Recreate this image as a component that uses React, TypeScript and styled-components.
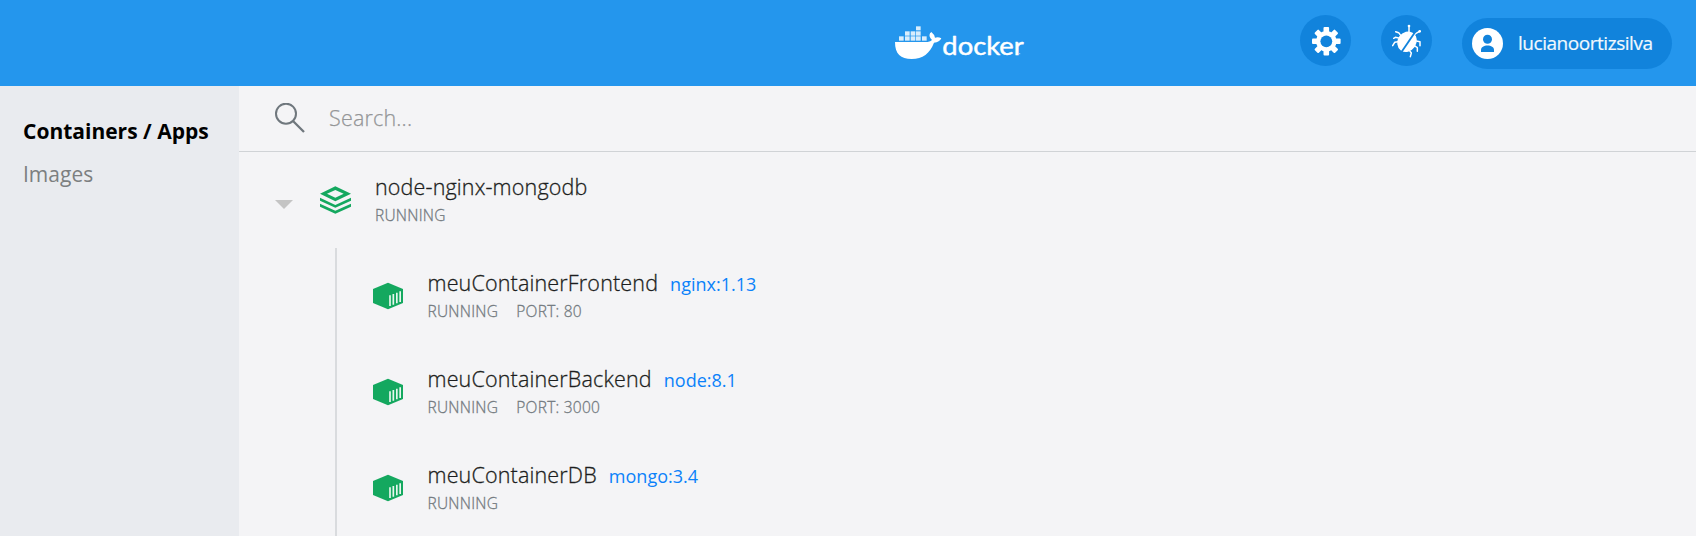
import React from "react";
import styled, { createGlobalStyle } from "styled-components";

const GlobalStyle = createGlobalStyle`
  * { box-sizing: border-box; }
  body {
    margin: 0;
    background: #f4f4f6;
    font-family: "Open Sans", "Noto Sans", sans-serif;
    overflow: hidden;
  }
`;

const Page = styled.div`
  display: flex;
  flex-direction: column;
  height: 536px;
  overflow: hidden;
`;

const Header = styled.header`
  display: flex;
  align-items: flex-start;
  flex: none;
  height: 86px;
  padding: 15px 24px 0 895px;
  background: #2496ed;
`;

const Brand = styled.div`
  display: flex;
  padding-top: 10px;
`;

const Actions = styled.div`
  display: flex;
  align-items: flex-start;
  gap: 30px;
  margin-left: auto;
`;

const RoundButton = styled.button`
  display: flex;
  align-items: center;
  justify-content: center;
  width: 51px;
  height: 51px;
  padding: 0;
  border: 0;
  border-radius: 50%;
  background: #1183dc;
`;

const UserPill = styled.button`
  display: flex;
  align-items: center;
  gap: 15px;
  width: 210px;
  height: 51px;
  margin-top: 3px;
  padding: 0 0 0 10px;
  border: 0;
  border-radius: 26px;
  background: #1183dc;
  color: #f1f8fe;
  font: 400 19px/24px "Open Sans", sans-serif;
`;

const UserName = styled.span`
  padding-bottom: 2px;
  letter-spacing: -0.46px;
  -webkit-text-stroke: 0.2px currentColor;
`;

const Body = styled.div`
  display: flex;
  flex: 1;
  min-height: 0;
`;

const Sidebar = styled.nav`
  display: flex;
  flex-direction: column;
  gap: 15px;
  flex: none;
  width: 239px;
  padding: 31px 0 0 23px;
  background: #e9ebef;
`;

const NavItem = styled.a<{ $active?: boolean }>`
  color: ${(p) => (p.$active ? "#000" : "#7c7f80")};
  font-size: 21px;
  font-weight: ${(p) => (p.$active ? 700 : 400)};
  line-height: 28px;
  white-space: nowrap;
`;

const Main = styled.main`
  flex: 1;
  min-width: 0;
`;

const SearchBar = styled.div`
  display: flex;
  align-items: flex-start;
  gap: 24px;
  height: 66px;
  padding: 17px 0 0 35px;
  border-bottom: 1px solid #d0d3d6;
`;

const SearchHint = styled.span`
  color: #949698;
  font-size: 21.5px;
  font-weight: 300;
  letter-spacing: 0.18px;
  line-height: 30px;
  -webkit-text-stroke: 0.25px currentColor;
`;

const GroupRow = styled.div`
  display: flex;
  align-items: flex-start;
  height: 96px;
  padding: 21px 0 0 36px;
`;

const CaretSlot = styled.span`
  display: flex;
  width: 45px;
  padding-top: 27px;
`;

const IconSlot = styled.span<{ $width: number }>`
  display: flex;
  width: ${(p) => p.$width}px;
  padding-top: 13px;
`;

const Children = styled.div`
  margin-left: 96px;
  border-left: 2px solid #d9dbde;
`;

const ContainerRow = styled.div`
  display: flex;
  align-items: flex-start;
  height: 96px;
  padding: 21px 0 0 36px;
`;

const Info = styled.div`
  display: flex;
  flex-direction: column;
  gap: 3px;
`;

const TitleLine = styled.div`
  display: flex;
  align-items: baseline;
  gap: 12px;
  height: 28px;
`;

const Name = styled.span`
  color: #1c1e20;
  font-size: 21.5px;
  font-weight: 300;
  letter-spacing: 0.16px;
  line-height: 28px;
  -webkit-text-stroke: 0.3px currentColor;
`;

const ImageTag = styled.a`
  color: #0b82fa;
  font-size: 18px;
  line-height: 28px;
`;

const StatusLine = styled.div`
  display: flex;
  gap: 18px;
  color: #737a80;
  font-size: 15.5px;
  font-weight: 300;
  letter-spacing: 0.25px;
  line-height: 22px;
  -webkit-text-stroke: 0.3px currentColor;
`;

const WordMark = styled.text`
  font-family: Lato, sans-serif;
  font-weight: 400;
  font-size: 77px;
  stroke: #fff;
  stroke-width: 1.4px;
  stroke-linejoin: round;
`;

const DockerLogo = () => (
  <svg width="130" height="36" viewBox="45 45 390 108" fill="#fff">
    <path d="M45 96H143Q152 95 156 90Q145 80 150 70L154 66Q163 73 165 83Q175 80 184 85Q179 97 162 98C150 130 128 147 95 147C62 147 45 132 45 96Z" />
    <g fill="#d9edfc">
      {[57, 75, 92, 108, 126].map((x) => (
        <rect key={x} x={x} y="79" width="14" height="13" />
      ))}
      {[75, 92, 108].map((x) => (
        <rect key={x} x={x} y="64" width="14" height="13" />
      ))}
      <rect x="108" y="49" width="14" height="12" />
    </g>
    <WordMark x="187" y="134" textLength="244" lengthAdjust="spacingAndGlyphs">
      docker
    </WordMark>
    <circle cx="419" cy="131" r="2" fill="#a7d5f8" />
  </svg>
);

const GearIcon = () => (
  <svg width="31" height="31" viewBox="-16.3 -16.3 31 31">
    {[0, 45, 90, 135].map((a) => (
      <rect key={a} x="-2.8" y="-14.3" width="5.6" height="28.6" rx="1" fill="#fff" transform={`rotate(${a})`} />
    ))}
    <circle r="10.3" fill="#fff" />
    <circle r="5.9" fill="#1183dc" />
  </svg>
);

const BugIcon = () => (
  <svg width="31" height="34" viewBox="303 56 93 102">
    <g fill="none" stroke="#fff" strokeWidth="4.5" strokeLinejoin="round" strokeLinecap="round">
      <path d="M357 82V63M372 90L378 84L389 78M332 90L326 82L317 79M326 98L316 96L311 99M324 109L314 111L308 121M379 107L390 109V121M373 121L382 127V138M358 135L364 143L361 154" />
    </g>
    <ellipse cx="351" cy="109" rx="32" ry="28" fill="#fff" transform="rotate(-55 351 109)" />
    <path d="M379 75L334 141" stroke="#1183dc" strokeWidth="5.500" />
    <g fill="#fff">
      <circle cx="357" cy="62" r="4" />
      <circle cx="389" cy="78" r="4" />
    </g>
  </svg>
);

const AvatarIcon = () => (
  <svg width="31" height="31" viewBox="0 0 31 31">
    <circle cx="15.5" cy="15.5" r="15.5" fill="#fff" />
    <circle cx="15.5" cy="11.3" r="4.5" fill="#1183dc" />
    <path d="M9 24V22C9 19 12 17.5 15.5 17.5S22 19 22 22V24Z" fill="#1183dc" />
  </svg>
);

const SearchIcon = () => (
  <svg width="31" height="31" viewBox="0 0 31 31" fill="none" stroke="#6f777d" strokeWidth="2">
    <circle cx="12" cy="10.7" r="10" />
    <path d="M19 18L30 29" strokeWidth="2.3" />
  </svg>
);

const CaretIcon = () => (
  <svg width="18" height="9" viewBox="0 0 18 9">
    <path d="M0 0H18L9 9Z" fill="#c4c4c4" />
  </svg>
);

const StackIcon = () => (
  <svg width="31" height="28" viewBox="270 318 93 84" fill="#14a85f">
    <path fillRule="evenodd" d="M316 319L363 341L316 364L270 341ZM316 330L291 341.500L316 353L341 341.500Z" />
    <path d="M270 353L316 375L363 353V362L316 383L270 362Z" />
    <path d="M270 371L316 392L363 371V380L316 401L270 380Z" />
  </svg>
);

const ContainerIcon = () => (
  <svg width="31" height="28" viewBox="159 126 93 84">
    <path d="M204 128L249 147V189L204 208L159 189V147Z" fill="#14a85f" />
    <path d="M210 166V198M220 162V194M230.500 158V190M240.500 154V186" stroke="#e9f6ef" strokeWidth="5" />
  </svg>
);

const containers = [
  { name: "meuContainerFrontend", image: "nginx:1.13", port: "80" },
  { name: "meuContainerBackend", image: "node:8.1", port: "3000" },
  { name: "meuContainerDB", image: "mongo:3.4" },
];

export default function App() {
  return (
    <Page>
      <GlobalStyle />
      <Header>
        <Brand>
          <DockerLogo />
        </Brand>
        <Actions>
          <RoundButton aria-label="Settings">
            <GearIcon />
          </RoundButton>
          <RoundButton aria-label="Troubleshoot">
            <BugIcon />
          </RoundButton>
          <UserPill>
            <AvatarIcon />
            <UserName>lucianoortizsilva</UserName>
          </UserPill>
        </Actions>
      </Header>
      <Body>
        <Sidebar>
          <NavItem $active>Containers / Apps</NavItem>
          <NavItem>Images</NavItem>
        </Sidebar>
        <Main>
          <SearchBar>
            <SearchIcon />
            <SearchHint>Search...</SearchHint>
          </SearchBar>
          <GroupRow>
            <CaretSlot>
              <CaretIcon />
            </CaretSlot>
            <IconSlot $width={55}>
              <StackIcon />
            </IconSlot>
            <Info>
              <TitleLine>
                <Name>node-nginx-mongodb</Name>
              </TitleLine>
              <StatusLine>RUNNING</StatusLine>
            </Info>
          </GroupRow>
          <Children>
            {containers.map((c) => (
              <ContainerRow key={c.name}>
                <IconSlot $width={54.5}>
                  <ContainerIcon />
                </IconSlot>
                <Info>
                  <TitleLine>
                    <Name>{c.name}</Name>
                    <ImageTag>{c.image}</ImageTag>
                  </TitleLine>
                  <StatusLine>
                    <span>RUNNING</span>
                    {c.port && <span>PORT: {c.port}</span>}
                  </StatusLine>
                </Info>
              </ContainerRow>
            ))}
          </Children>
        </Main>
      </Body>
    </Page>
  );
}
